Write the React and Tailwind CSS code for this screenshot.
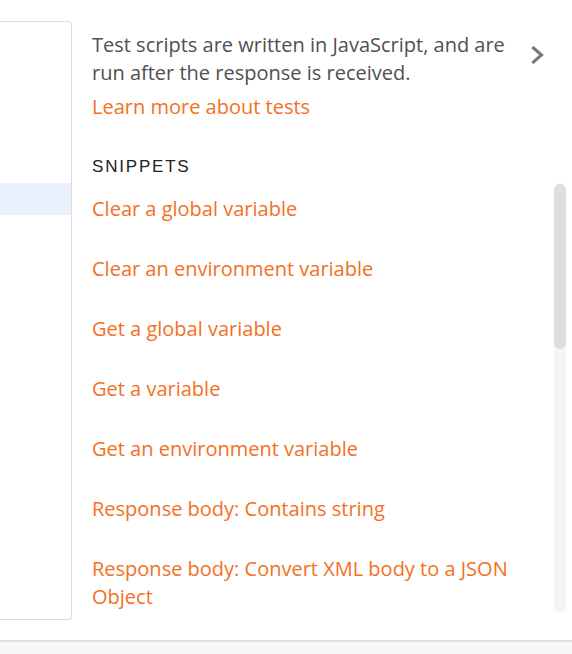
import React from 'react';

const snippets = [
  'Clear a global variable',
  'Clear an environment variable',
  'Get a global variable',
  'Get a variable',
  'Get an environment variable',
  'Response body: Contains string',
  'Response body: Convert XML body to a JSON Object',
];

const App = () => {
  return (
    <div className="w-[572px] h-[654px] bg-white flex flex-col overflow-hidden" style={{ fontFamily: '"Open Sans", sans-serif' }}>
      <div className="h-[640px] flex pt-[21px]">

        {/* Left list panel */}
        <div className="w-[72px] h-[599px] shrink-0 border border-l-0 border-[#dcdcdc] rounded-r-[4px] pt-[161px]">
          <div className="h-[32px] bg-[#e8f1fc]" />
        </div>

        {/* Tests help + snippets */}
        <div className="flex-1 flex flex-col pl-[20px] pt-[10px]">
          <div className="flex">
            <p className="w-[428px] text-[20px] leading-[28px] text-[#505050]">
              Test scripts are written in JavaScript, and are run after the response is received.
            </p>
            <div className="ml-[11px] pt-[15px]">
              <svg width="14" height="18" viewBox="0 0 14 18" fill="none">
                <path d="M2.5 2 L10.5 9 L2.5 16" stroke="#787878" strokeWidth="3" strokeLinecap="square" />
              </svg>
            </div>
          </div>
          <a href="#" className="mt-[6px] text-[20px] leading-[28px] text-[#f47023]">Learn more about tests</a>

          <h4 className="mt-[34px] text-[17px] leading-[24px] tracking-[1.8px] text-[#222]" style={{ fontFamily: '"Liberation Sans", Arial, sans-serif' }}>
            SNIPPETS
          </h4>

          <div className="mt-[4px] h-[430px] flex">
            <ul className="flex-1 overflow-hidden pt-[12px] flex flex-col gap-[32px] pr-[20px]">
              {snippets.map((s) => (
                <li key={s} className="text-[20px] leading-[28px] text-[#f47023]">
                  <a href="#">{s}</a>
                </li>
              ))}
            </ul>
            {/* Scrollbar */}
            <div className="w-[12px] mr-[6px] bg-[#f5f5f5] rounded-full">
              <div className="h-[165px] mt-[1px] bg-[#dedede] rounded-full" />
            </div>
          </div>
        </div>
      </div>

      {/* Bottom bar */}
      <div className="flex-1 border-t-2 border-[#e0e0e0] bg-[#f7f7f7]" />
    </div>
  );
};

export default App;
